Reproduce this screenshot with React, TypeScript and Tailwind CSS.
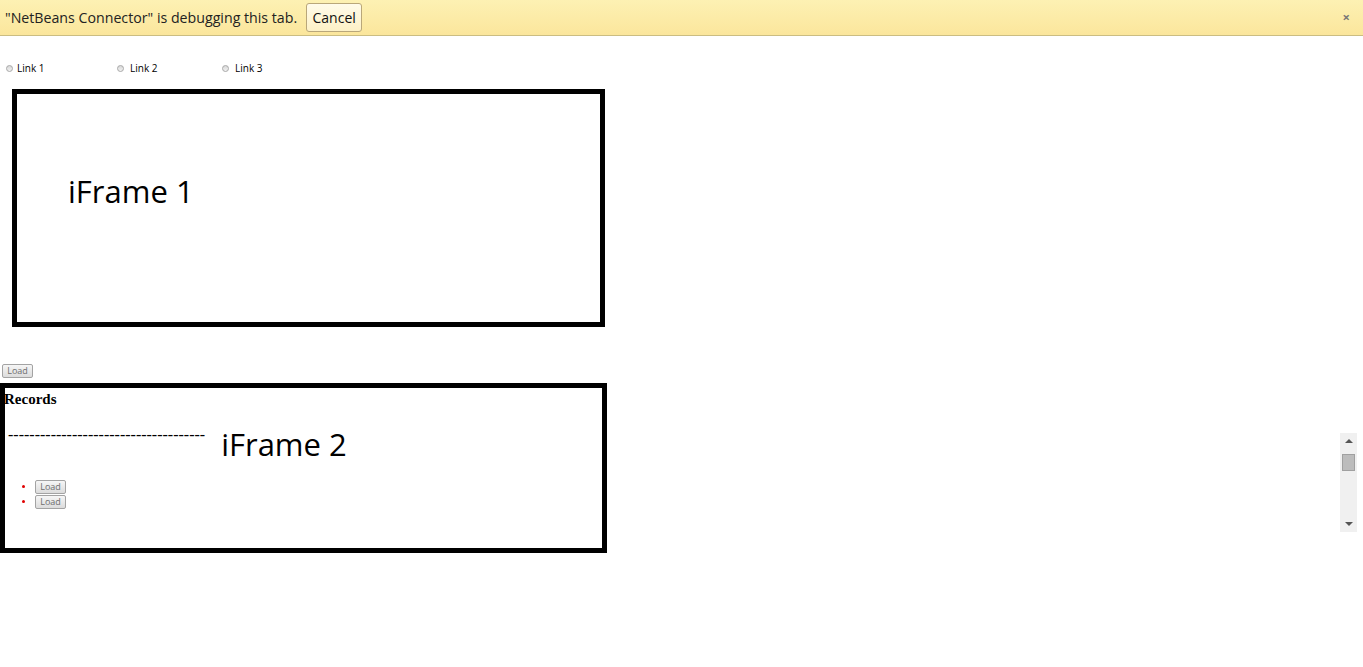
import React from "react";

const LoadButton = () => (
  <button className="h-[14px] w-[31px] rounded-[2px] border border-[#a3a3a3] bg-gradient-to-b from-[#f6f6f6] to-[#dcdcdc] text-[9px] leading-[12px] text-[#6e6e6e] [font-family:'Open_Sans',sans-serif]">
    Load
  </button>
);

const Radio = () => (
  <span className="inline-block h-[7px] w-[7px] rounded-full border border-[#a8a8a8] bg-gradient-to-b from-[#d8d8d8] to-[#f2f2f2]" />
);

const links = [
  { label: "Link 1", w: "w-[111px]" },
  { label: "Link 2", w: "w-[105px]" },
  { label: "Link 3", w: "w-[60px]" },
];

export default function App() {
  return (
    <div className="relative h-[667px] w-full overflow-hidden bg-white [font-family:'Open_Sans',sans-serif]">
      {/* debugging infobar */}
      <div className="flex h-[36px] items-center border-b border-[#cbbd82] bg-gradient-to-b from-[#fdf1b3] to-[#fbe69c] pl-[5px] pr-[13px]">
        <span className="text-[14.2px] text-[#222]">"NetBeans Connector" is debugging this tab.</span>
        <button className="ml-[9px] h-[29px] w-[56px] rounded-[3px] border border-[#b9a77a] bg-gradient-to-b from-[#fffbea] to-[#fdf1c6] text-[14px] text-[#111]">
          Cancel
        </button>
        <span className="ml-auto text-[13px] font-bold text-[#777]">×</span>
      </div>

      {/* links */}
      <div className="mt-[26px] flex items-center pl-[6px]">
        {links.map((l, i) => (
          <div key={l.label} className={`flex items-center ${l.w}`}>
            <Radio />
            <span className={`text-[10px] leading-[12px] text-black ${i === 0 ? "ml-[4px]" : "ml-[6px]"}`}>
              {l.label}
            </span>
          </div>
        ))}
      </div>

      {/* iframe 1 */}
      <div className="ml-[12px] mt-[15px] h-[238px] w-[593px] border-[5px] border-black pl-[51px] pt-[77px]">
        <span className="text-[31px] leading-[40px] text-black">iFrame 1</span>
      </div>

      <div className="mt-[33px] pl-[2px] leading-none">
        <LoadButton />
      </div>

      {/* iframe 2 */}
      <div className="mt-[5px] h-[170px] w-[607px] border-[5px] border-black">
        <div className="-ml-px pt-[2px] text-[15px] font-bold leading-[18px] text-black [font-family:'Liberation_Serif',serif]">
          Records
        </div>
        <div className="flex items-start">
          <span className="ml-[3px] mt-[17px] text-[16px] leading-[20px] text-black [font-family:'Liberation_Serif',serif]">
            -------------------------------------
          </span>
          <span className="ml-[16px] mt-[16px] text-[31px] leading-[40px] text-black">iFrame 2</span>
        </div>
        <ul className="mt-[15px] flex flex-col pl-[17px]">
          {[0, 1].map((i) => (
            <li key={i} className="flex h-[15px] items-center leading-none">
              <span className="inline-block h-[3px] w-[3px] rounded-full bg-[#e00000]" />
              <span className="ml-[10px] flex">
                <LoadButton />
              </span>
            </li>
          ))}
        </ul>
      </div>

      {/* stray scrollbar */}
      <div className="absolute left-[1340px] top-[433px] flex h-[99px] w-[17px] flex-col items-center bg-[#f0f0f0]">
        <div className="mt-[6px] h-0 w-0 border-x-[4px] border-b-[4px] border-x-transparent border-b-[#555]" />
        <div className="mt-[11px] h-[17px] w-[13px] border border-[#a0a0a0] bg-[#bcbcbc]" />
        <div className="mt-auto mb-[6px] h-0 w-0 border-x-[4px] border-t-[4px] border-x-transparent border-t-[#555]" />
      </div>
    </div>
  );
}
